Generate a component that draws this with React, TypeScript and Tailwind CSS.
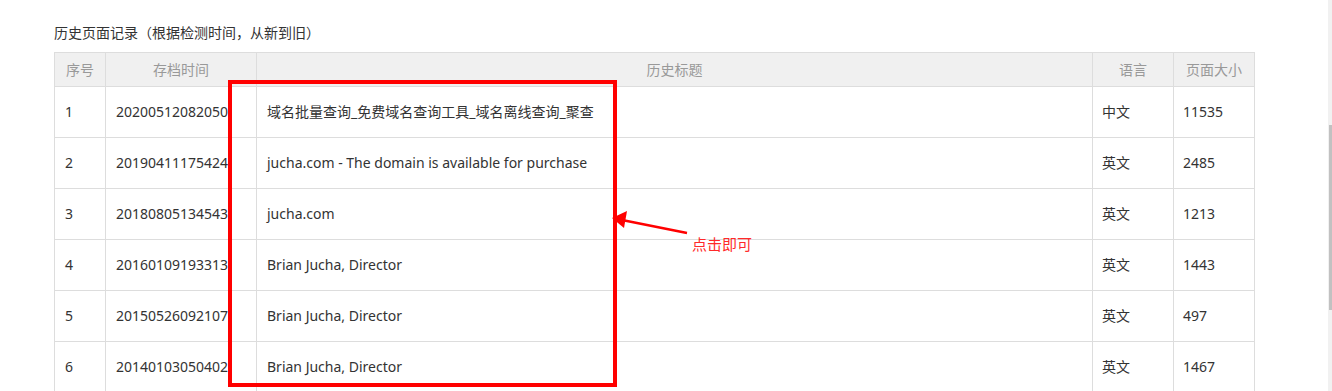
import React from "react";

const ROWS = [
  { no: 1, time: "20200512082050", title: "域名批量查询_免费域名查询工具_域名离线查询_聚查", lang: "中文", size: "11535" },
  { no: 2, time: "20190411175424", title: "jucha.com - The domain is available for purchase", lang: "英文", size: "2485" },
  { no: 3, time: "20180805134543", title: "jucha.com", lang: "英文", size: "1213" },
  { no: 4, time: "20160109193313", title: "Brian Jucha, Director", lang: "英文", size: "1443" },
  { no: 5, time: "20150526092107", title: "Brian Jucha, Director", lang: "英文", size: "497" },
  { no: 6, time: "20140103050402", title: "Brian Jucha, Director", lang: "英文", size: "1467" },
];

const font = "font-['Segoe_UI','Noto_Sans','Noto_Sans_CJK_SC',sans-serif]";

export default function App() {
  return (
    <div className={`relative w-[1332px] h-[391px] overflow-hidden bg-white ${font}`}>
      <div className="flex h-full">
        <div className="flex-1 pl-[54px] pt-[22px]">
          <h3 className="text-[14px] leading-[22px] text-[#333] mb-[8px]">历史页面记录（根据检测时间，从新到旧）</h3>
          <table className="table-fixed border-collapse w-[1200px] text-[14px] text-[#333]">
            <colgroup>
              <col className="w-[51px]" />
              <col className="w-[151px]" />
              <col className="w-[836px]" />
              <col className="w-[81px]" />
              <col className="w-[81px]" />
            </colgroup>
            <thead>
              <tr className="h-[34px] bg-[#f0f0f0] text-[14px] text-[#999]">
                {["序号", "存档时间", "历史标题", "语言", "页面大小"].map((h) => (
                  <th key={h} className="border border-[#ddd] font-normal text-center">{h}</th>
                ))}
              </tr>
            </thead>
            <tbody>
              {ROWS.map((r) => (
                <tr key={r.no} className="h-[51px]">
                  <td className="border border-[#ddd] px-[10px] pb-[2px] whitespace-nowrap">{r.no}</td>
                  <td className="border border-[#ddd] px-[10px] pb-[2px] whitespace-nowrap overflow-hidden">{r.time}</td>
                  <td className="border border-[#ddd] px-[10px] pb-[2px] whitespace-nowrap">{r.title}</td>
                  <td className="border border-[#ddd] px-[9px] pb-[2px] whitespace-nowrap">{r.lang}</td>
                  <td className="border border-[#ddd] px-[9px] pb-[2px] whitespace-nowrap">{r.size}</td>
                </tr>
              ))}
            </tbody>
          </table>
        </div>
        {/* scrollbar */}
        <div className="w-[4px] h-full bg-[#f1f1f1] pt-[125px]">
          <div className="ml-[1px] w-[3px] h-[185px] bg-[#c1c1c1]" />
        </div>
      </div>

      {/* annotation */}
      <div className="absolute left-[228px] top-[80px] w-[389px] h-[307px] border-4 border-[#ff0000]" />
      <svg className="absolute left-0 top-0" width="1332" height="391">
        <line x1="687" y1="233" x2="622" y2="220" stroke="#ff0000" strokeWidth="2.5" />
        <polygon points="612,218 627,211 624,228" fill="#ff0000" />
      </svg>
      <div className="absolute left-[692px] top-[233px] text-[15px] leading-[22px] text-[#ff2a2a]">点击即可</div>
    </div>
  );
}
